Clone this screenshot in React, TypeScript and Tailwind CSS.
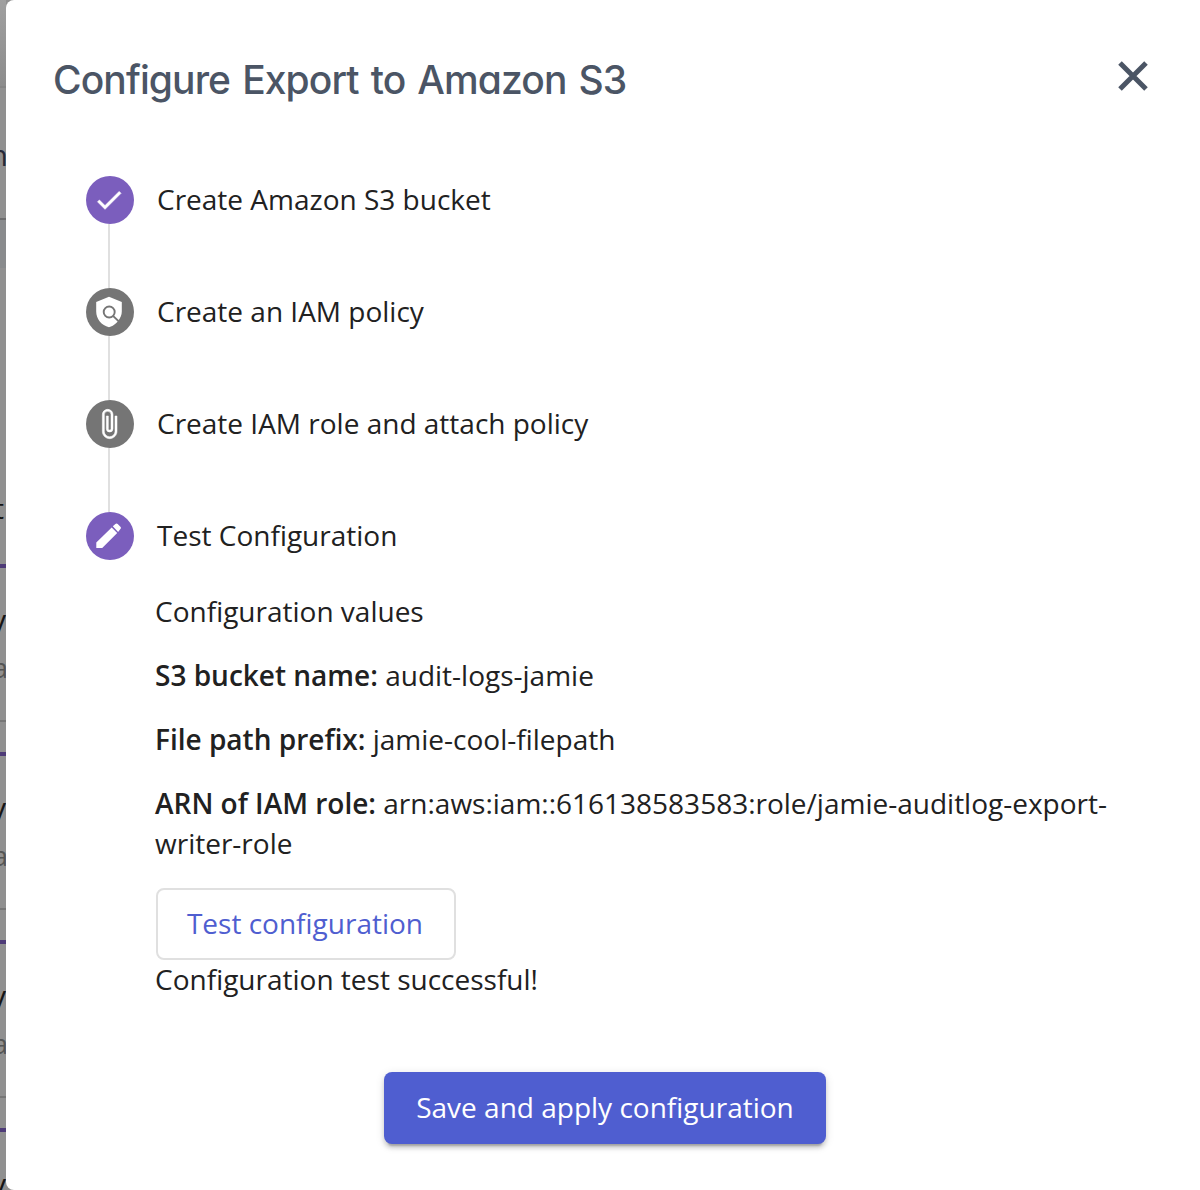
import React from "react";

type Step = { label: string; icon: React.ReactNode; active: boolean };

function CheckIcon() {
  return (
    <svg width="32" height="32" viewBox="0 0 24 24" fill="currentColor" stroke="currentColor" strokeWidth="0.5" strokeLinejoin="round">
      <path d="M9 16.2 4.8 12l-1.4 1.4L9 19 21 7l-1.4-1.4L9 16.2z" />
    </svg>
  );
}

function PolicyIcon() {
  return (
    <svg width="32" height="32" viewBox="0 0 32 32">
      <path fill="currentColor" d="M16 .8 3.2 6v9.5C3.2 23 8.5 29.4 16 31.2c2.700-.7 5-2 7-3.900 1-.9 1.700-1.800 2.300-2.800 2.200-2.700 3.500-5.700 3.500-9V6z" />
      <circle cx="16.2" cy="16" r="5.5" fill="none" stroke="#757575" strokeWidth="1.9" />
      <path d="m20 19.900 6.300 6" fill="none" stroke="#757575" strokeWidth="2" />
    </svg>
  );
}

function AttachIcon() {
  return (
    <svg width="32" height="32" viewBox="0 0 24 24" fill="currentColor" stroke="currentColor" strokeWidth="0.4" strokeLinejoin="round">
      <path d="M16.500 6v11.500c0 2.210-1.790 4-4 4s-4-1.790-4-4V5a2.500 2.500 0 0 1 5 0v10.500c0 .55-.45 1-1 1s-1-.45-1-1V6H10v9.500a2.500 2.500 0 0 0 5 0V5c0-2.210-1.790-4-4-4S7 2.790 7 5v12.500c0 3.040 2.460 5.500 5.500 5.500s5.500-2.460 5.500-5.500V6h-1.500z" />
    </svg>
  );
}

function PencilIcon() {
  return (
    <svg width="32" height="32" viewBox="0 0 32 32" fill="currentColor">
      <path d="M3.300 22.500V28h5.900l15-14.900-5.500-5.600zM19.800 6.300l2.600-2.400c.7-.7 1.600-.7 2.300 0l2.700 2.800c.7.700.7 1.600 0 2.300L25.100 11.900z" />
    </svg>
  );
}

const steps: Step[] = [
  { label: "Create Amazon S3 bucket", icon: <CheckIcon />, active: true },
  { label: "Create an IAM policy", icon: <PolicyIcon />, active: false },
  { label: "Create IAM role and attach policy", icon: <AttachIcon />, active: false },
  { label: "Test Configuration", icon: <PencilIcon />, active: true },
];

function BackdropCard() {
  return (
    <div className="h-[188px] shrink-0">
      <div className="h-[158px] border-t-4 border-b-2 border-t-[#4e3b78] border-b-[#777777]">
        <div className="flex h-[72px] items-end justify-end text-[30px] leading-[40px] text-[#151515]">y</div>
        <div className="-mr-[2px] flex h-[47px] items-end justify-end text-[28px] leading-[40px] text-[#555555]">a</div>
      </div>
    </div>
  );
}

// Dimmed page that stays visible beside the dialog.
function Backdrop() {
  return (
    <div aria-hidden="true" className="flex h-full w-[6px] shrink-0 flex-col overflow-hidden bg-[#909090]">
      <div className="h-[86px] shrink-0 bg-linear-to-b from-[#a0a0a0] to-[#8c8c8c]" />
      <div className="-mr-[2px] flex h-[134px] shrink-0 items-center justify-end border-t-2 border-b-2 border-t-[#858585] border-b-[#6d6d6e] pt-1 text-[30px] text-[#262938]">n</div>
      <div className="h-[48px] shrink-0 bg-[#898b8d]" />
      <div className="flex h-[296px] shrink-0 items-end justify-end pr-[2px] pb-[36px] text-[28px] leading-[40px] text-[#151515]">t</div>
      <BackdropCard />
      <BackdropCard />
      <BackdropCard />
      <BackdropCard />
    </div>
  );
}

function Value({ name, children }: { name: string; children: React.ReactNode }) {
  return (
    <p>
      <strong className="font-semibold">{name}</strong> {children}
    </p>
  );
}

export default function App() {
  return (
    <div className="flex h-[1190px] w-[1200px] overflow-hidden bg-[#909090] font-['Open_Sans',sans-serif] text-[28px] leading-[40px] text-[#212121]">
      <Backdrop />
      <main className="flex min-w-0 flex-1 flex-col rounded-l-[8px] bg-white">
        <header className="flex items-start justify-between pt-[56px] pr-[50px] pl-[47px]">
          <h1 className="font-['Inter',sans-serif] text-[39px] leading-[48px] font-medium tracking-[-0.9px] [word-spacing:2.5px] whitespace-nowrap text-[#4b5565] [font-feature-settings:'cv11']">
            Configure Export to Amazon S3
          </h1>
          <button aria-label="Close" className="mt-[3px]">
            <svg width="34" height="34" viewBox="0 0 34 34" fill="none" stroke="#4b5565" strokeWidth="5">
              <path d="M4 4 30 30M30 4 4 30" />
            </svg>
          </button>
        </header>

        <ol className="mt-[72px] pl-[80px]">
          {steps.map((step, i) => (
            <li key={step.label} className="flex gap-[23px]">
              <div className="flex w-[48px] flex-col items-center">
                <div
                  className={`flex size-[48px] items-center justify-center rounded-full pr-[2px] text-white ${
                    step.active ? "bg-[#7b5ebd]" : "bg-[#757575]"
                  }`}
                >
                  {step.icon}
                </div>
                {i < steps.length - 1 && <div className="mr-[2px] h-[64px] w-[2px] bg-[#e0e0e0]" />}
              </div>
              <span className="leading-[46px]">{step.label}</span>
            </li>
          ))}
        </ol>

        <section className="mt-[31px] flex flex-col items-start gap-[24px] pr-[70px] pl-[149px]">
          <p>Configuration values</p>
          <Value name="S3 bucket name:">audit-logs-jamie</Value>
          <Value name="File path prefix:">jamie-cool-filepath</Value>
          <Value name="ARN of IAM role:">arn:aws:iam::616138583583:role/jamie-auditlog-export-writer-role</Value>
          <div className="pt-px">
            <button className="ml-px block h-[72px] w-[300px] rounded-[8px] border-2 border-[#e0e0e0] pr-[2px] pb-[2px] text-[#4f5ed0]">
              Test configuration
            </button>
            <p className="-mt-px">Configuration test successful!</p>
          </div>
        </section>

        <button className="mt-[73px] ml-[378px] h-[72px] w-[442px] rounded-[8px] bg-[#4f5ed0] pb-[2px] text-white shadow-[0_6px_2px_-4px_rgba(0,0,0,0.2),0_4px_4px_0_rgba(0,0,0,0.14),0_2px_10px_0_rgba(0,0,0,0.12)]">
          Save and apply configuration
        </button>
      </main>
    </div>
  );
}
